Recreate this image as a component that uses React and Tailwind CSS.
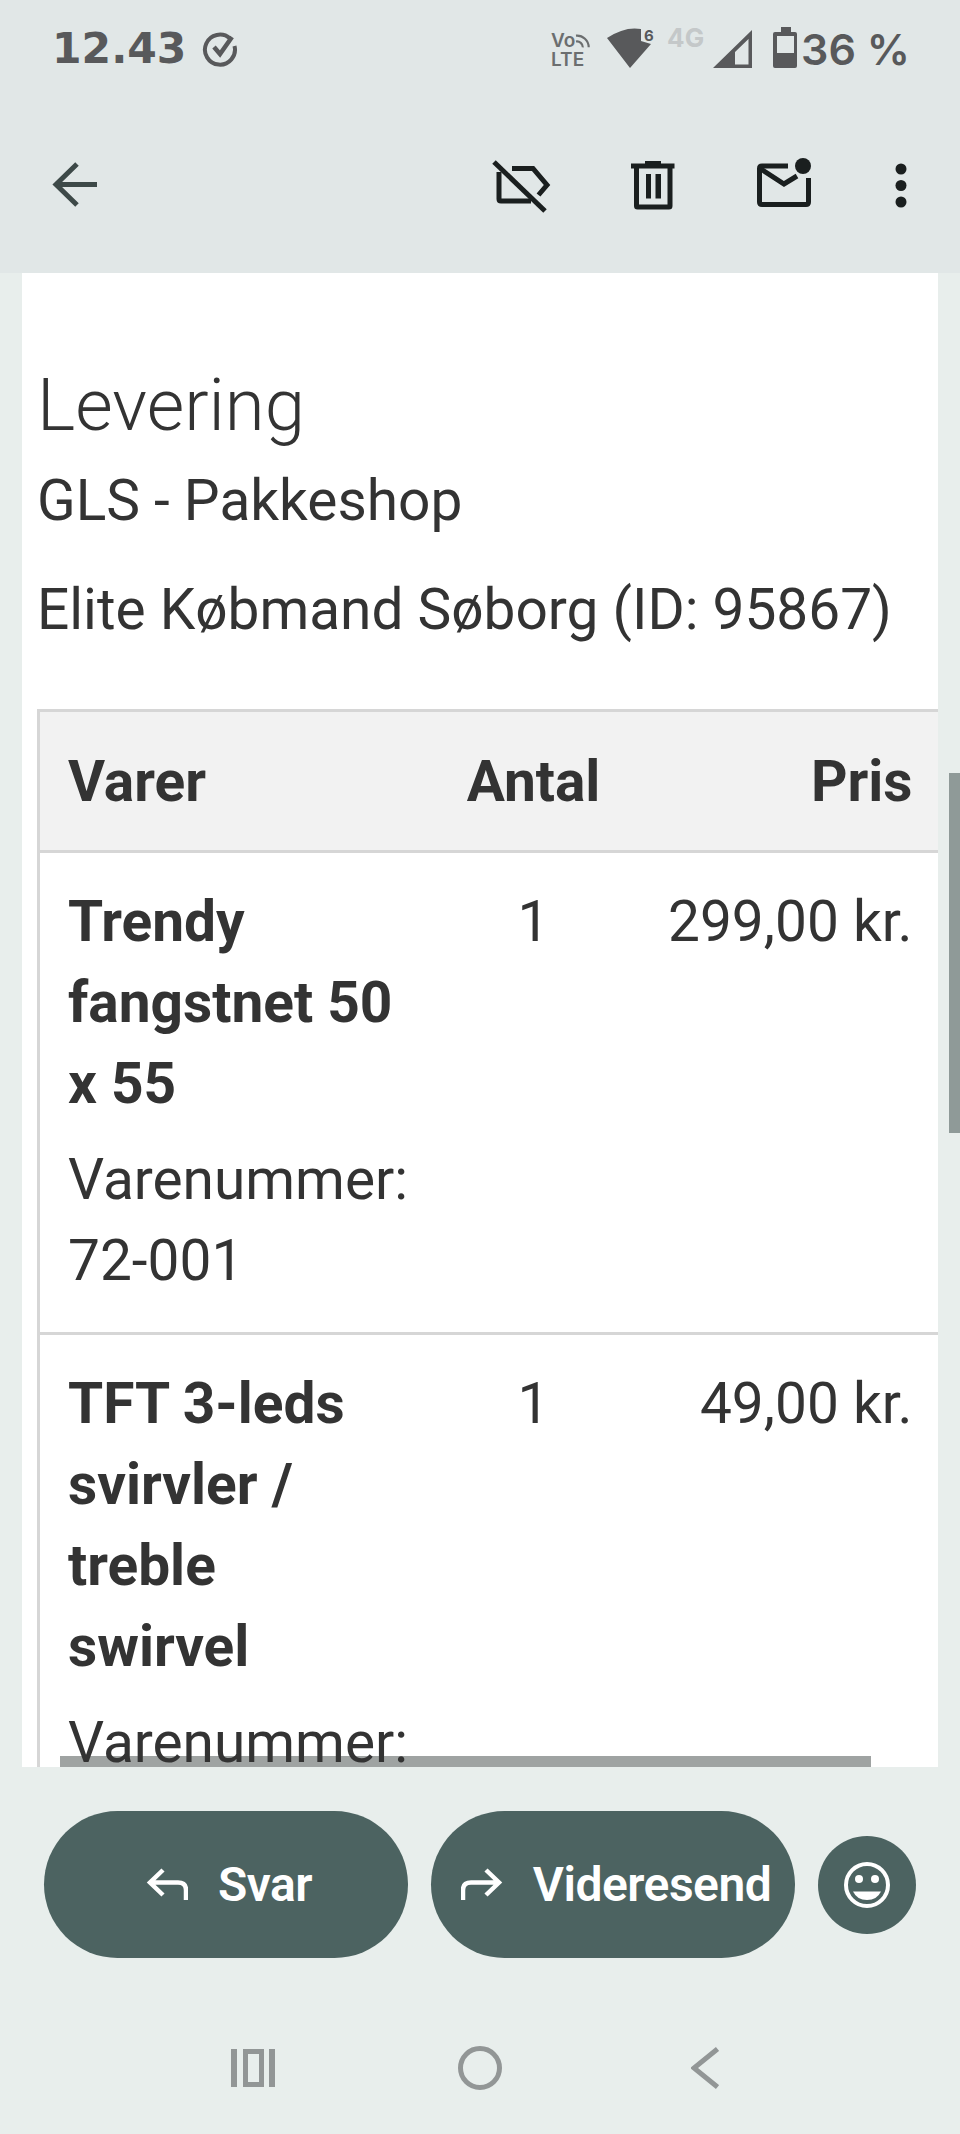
import React from 'react';

const ROBOTO = "font-['Roboto',sans-serif]";

function StatusBar() {
    return (
        <div className="flex items-center h-[98px] pl-[52px] pr-[50px] text-[#58595b]">
            <span className="font-['DejaVu_Sans',sans-serif] font-bold text-[42.5px] leading-none">12.43</span>
            <svg className="ml-[15px]" width="38" height="48" viewBox="200 25 38 48" fill="none" stroke="currentColor">
                <path d="M229 38.5 A15 15 0 1 0 233.5 46" strokeWidth="4" />
                <path d="M213 47 L219 54 L231 37" strokeWidth="4.5" />
            </svg>
            <div className="ml-auto flex items-center">
                <div className="w-[40px] mr-[14px] mt-[2px] font-['Inter',sans-serif] font-semibold text-[#6b6e6f] text-[19px] leading-[19px]">
                    <div className="flex items-center h-[18px]">Vo
                        <svg width="17" height="17" viewBox="0 0 16 16" fill="none" stroke="currentColor" strokeWidth="2.2">
                            <path d="M1 3 A12 12 0 0 1 14 15 M1 9 A6 6 0 0 1 8 15" />
                        </svg>
                    </div>
                    <div>LTE</div>
                </div>
                <svg width="52" height="48" viewBox="608 25 52 48" fill="currentColor">
                    <path d="M633 68 L610 38 Q628 26 644 29 L644 41 L654 44 Z" />
                    <text x="647" y="41" fontSize="15" fontWeight="700" fontFamily="Inter, sans-serif">6</text>
                </svg>
                <span className="ml-[10px] w-[40px] -mt-[22px] font-['Inter',sans-serif] font-bold text-[#c4c8c9] text-[26px] leading-none">4G</span>
                <svg className="ml-[5px]" width="42" height="48" viewBox="714 25 42 48" fill="currentColor">
                    <path d="M715 68 L754 30 V68 Z M737 64.5 H750.5 V39 L737 52 Z" fillRule="evenodd" />
                </svg>
                <svg className="ml-[18px]" width="26" height="48" viewBox="773 25 26 48" fill="currentColor">
                    <path d="M782 27 H792 V32 H796 Q798 32 798 34 V66 Q798 68 796 68 H776 Q774 68 774 66 V34 Q774 32 776 32 H782 Z M778 36 V53 H795 V36 Z" fillRule="evenodd" />
                </svg>
                <span className="ml-[3px] font-['Inter',sans-serif] font-semibold text-[43px] leading-none">36 %</span>
            </div>
        </div>
    );
}

function Toolbar() {
    return (
        <div className="flex items-center h-[175px] pl-[50px] text-[#1a1f1f]">
            <svg width="50" height="59" viewBox="50 156 50 59" fill="none" stroke="#3d4948" strokeWidth="5">
                <path d="M97 184.5 H56 M77 164 L56 184.5 L77 205" />
            </svg>
            {/* label off */}
            <svg className="ml-[390px]" width="64" height="59" viewBox="490 156 64 59" fill="none" stroke="currentColor" strokeWidth="5">
                <path d="M512 168.5 H533 L547 185 L538.5 195" />
                <path d="M499 172 V199 Q499 201 501 201 H531" />
                <path d="M494 162 L545 211" />
            </svg>
            {/* trash */}
            <svg className="ml-[74px]" width="50" height="59" viewBox="628 156 50 59" fill="currentColor">
                <path d="M631 163.5 H645 V161 H661 V163.5 H674.5 V168.5 H672.5 V206 Q672.5 209.5 669 209.5 H637.5 Q634 209.5 634 206 V168.5 H631 Z M639 168.5 V204.5 H667.5 V168.5 Z" fillRule="evenodd" />
                <rect x="646" y="174" width="5" height="24.5" />
                <rect x="655.5" y="174" width="5.5" height="24.5" />
            </svg>
            {/* mail with unread dot */}
            <svg className="ml-[77px]" width="58" height="59" viewBox="755 156 58 59" fill="none" stroke="currentColor" strokeWidth="5">
                <path d="M788 166 H762 Q759.5 166 759.5 168.5 V202 Q759.5 204.5 762 204.5 H806 Q808.5 204.5 808.5 202 V178" />
                <path d="M761 169 L784 184 L797 176" />
                <circle cx="803" cy="166" r="8" fill="currentColor" stroke="none" />
            </svg>
            <svg className="ml-[80px]" width="16" height="59" viewBox="891 156 16 59" fill="currentColor">
                <circle cx="899" cy="169" r="5.5" />
                <circle cx="899" cy="185.5" r="5.5" />
                <circle cx="899" cy="202" r="5.5" />
            </svg>
        </div>
    );
}

const ITEMS = [
    { name: 'Trendy fangstnet 50 x 55', sku: '72-001', qty: 1, price: '299,00 kr.' },
    { name: 'TFT 3-leds svirvler / treble swirvel', sku: '', qty: 1, price: '49,00 kr.' },
];

function OrderTable() {
    return (
        <table className="relative z-10 ml-[15px] mt-[59px] w-[904px] table-fixed border-collapse text-[#333333] text-[56.8px] leading-[81px]">
            <colgroup>
                <col className="w-[402px]" />
                <col className="w-[186px]" />
                <col className="w-[316px]" />
            </colgroup>
            <thead>
                <tr className="bg-[#f2f2f2] font-bold">
                    <th className="border-l-[3px] border-y-[3px] border-[#d6d6d6] pl-[28px] h-[141px] text-left font-bold">Varer</th>
                    <th className="border-y-[3px] border-[#d6d6d6] text-center font-bold">Antal</th>
                    <th className="border-y-[3px] border-[#d6d6d6] pr-[30px] text-right font-bold">Pris</th>
                </tr>
            </thead>
            <tbody>
                {ITEMS.map((item) => (
                    <tr key={item.name} className="align-top">
                        <td className="border-l-[3px] border-b-[3px] border-[#d6d6d6] pl-[28px] pr-[31px] pt-[28px] pb-[31px]">
                            <div className="font-bold">{item.name}</div>
                            <div className="mt-[15px]">Varenummer: {item.sku}</div>
                        </td>
                        <td className="border-b-[3px] border-[#d6d6d6] pt-[28px] text-center">{item.qty}</td>
                        <td className="border-b-[3px] border-[#d6d6d6] pt-[28px] pr-[30px] text-right">{item.price}</td>
                    </tr>
                ))}
            </tbody>
        </table>
    );
}

function ReplyIcon({ flip }) {
    return (
        <svg width="42" height="34" viewBox="146 1868 42 34" fill="none" stroke="white" strokeWidth="4.5" className={flip ? '-scale-x-100' : ''}>
            <path d="M163 1870 L150 1882.5 L163 1895 M150 1882.5 H178 Q186 1882.5 186 1890 V1900" />
        </svg>
    );
}

function ActionButton({ label, flip }) {
    return (
        <div className="flex items-center justify-center gap-[30px] w-[364px] h-[147px] rounded-full bg-[#4c6361] pl-[6px] text-white font-semibold text-[48px] tracking-[-0.5px]">
            <ReplyIcon flip={flip} />
            <span>{label}</span>
        </div>
    );
}

export default function App() {
    return (
        <div className={`${ROBOTO} relative flex flex-col w-[960px] h-[2134px] overflow-hidden bg-[#e8eeec]`}>
            <div className="bg-[#e1e7e7] h-[273px]">
                <StatusBar />
                <Toolbar />
            </div>

            {/* Mail body */}
            <div className="relative mx-[22px] h-[1494px] overflow-hidden bg-white">
                <div className="pl-[15px] pt-[88px] text-[#333333]">
                    <h2 className="font-light text-[72.5px] leading-[90px]">Levering</h2>
                    <p className="text-[56.8px] leading-[81px] mt-[9px]">GLS - Pakkeshop</p>
                    <p className="text-[56.8px] leading-[81px] mt-[28px]">Elite Købmand Søborg (ID: 95867)</p>
                </div>
                <OrderTable />
                <div className="absolute left-[38px] bottom-0 w-[811px] h-[11px] bg-[#9fa3a2]" />
            </div>

            {/* Vertical scrollbar */}
            <div className="absolute right-0 top-[773px] w-[11px] h-[360px] bg-[#8f9a98]" />

            <div className="flex items-center pl-[44px] mt-[44px] gap-[23px]">
                <ActionButton label="Svar" />
                <ActionButton label="Videresend" flip />
                <div className="flex items-center justify-center w-[98px] h-[98px] rounded-full bg-[#4c6361]">
                    <svg width="46" height="46" viewBox="843 1861 46 46" fill="white">
                        <circle cx="866" cy="1884" r="21" fill="none" stroke="white" strokeWidth="4" />
                        <circle cx="858" cy="1878" r="4" />
                        <circle cx="874" cy="1878" r="4" />
                        <path d="M852 1890.5 H880 Q876 1899 866 1899 Q856 1899 852 1890.5 Z" />
                    </svg>
                </div>
            </div>

            {/* Android nav bar */}
            <div className="flex items-center mt-[88px] pl-[231px] text-[#929696]">
                <svg width="44" height="40" viewBox="231 2048 44 40" fill="currentColor">
                    <rect x="231" y="2049" width="6" height="38" />
                    <path d="M243 2049 H264 V2087 H243 Z M248 2054 V2082 H259 V2054 Z" fillRule="evenodd" />
                    <rect x="269" y="2049" width="6" height="38" />
                </svg>
                <svg className="ml-[183px]" width="44" height="44" viewBox="458 2046 44 44" fill="none" stroke="currentColor" strokeWidth="5">
                    <circle cx="480" cy="2068" r="19.5" />
                </svg>
                <svg className="ml-[189px]" width="28" height="44" viewBox="690 2046 28 44" fill="none" stroke="currentColor" strokeWidth="5">
                    <path d="M716.5 2049 L693 2068 L716.5 2087" />
                </svg>
            </div>
        </div>
    );
}
